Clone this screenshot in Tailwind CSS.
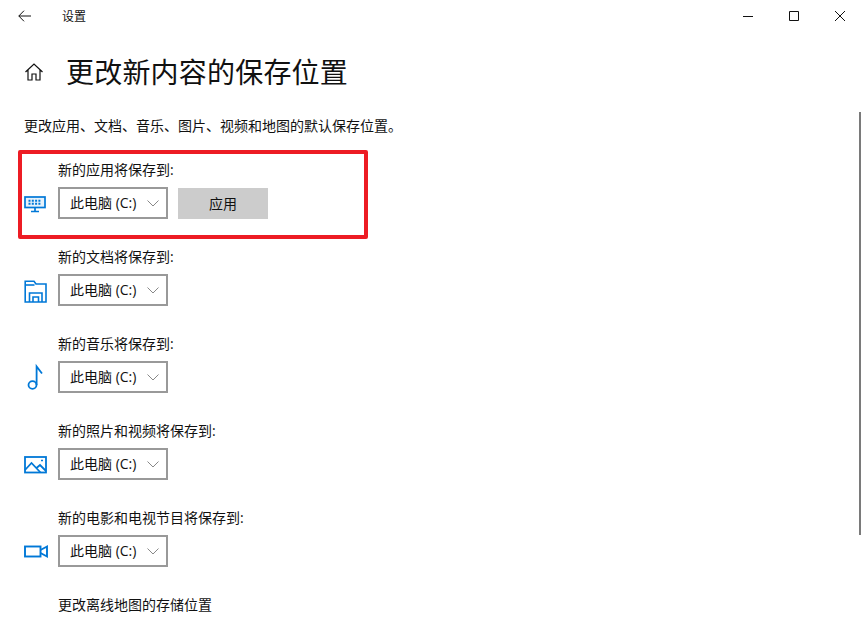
<!DOCTYPE html>
<html lang="zh-CN">
<head>
    <meta charset="UTF-8">
    <title>设置</title>
    <script src="https://cdn.jsdelivr.net/npm/@tailwindcss/browser@4"></script>
</head>
<body class="bg-white text-[#111] font-['Open_Sans','Noto_Sans_CJK_SC',sans-serif] overflow-hidden">
<div class="relative w-[863px] h-[620px] overflow-hidden">

    <!-- title bar -->
    <div class="flex items-center h-8">
        <div class="w-12 flex justify-center">
            <svg width="13" height="12" viewBox="0 0 13 12" fill="none" stroke="#111" stroke-width="1"><path d="M.8 6H13M6 .7L.8 6L6 11.3"/></svg>
        </div>
        <span class="ml-[14px] mt-[2px] text-xs">设置</span>
        <div class="ml-auto flex items-center">
            <div class="w-[46px] flex justify-center"><svg width="10" height="10" viewBox="0 0 10 10" stroke="#111" fill="none"><path d="M0 5.5H10"/></svg></div>
            <div class="w-[46px] flex justify-center"><svg width="10" height="10" viewBox="0 0 10 10" stroke="#111" fill="none"><path d="M.5.5H9.5V9.5H.5Z"/></svg></div>
            <div class="w-[46px] flex justify-center"><svg width="10" height="10" viewBox="0 0 10 10" stroke="#111" fill="none"><path d="M0 0L10 10M10 0L0 10"/></svg></div>
        </div>
    </div>

    <!-- heading -->
    <div class="flex items-center mt-[19px] h-[42px] pl-[24px]">
        <svg width="20" height="20" viewBox="0 0 20 20" fill="none" stroke="#111" stroke-width="1.2"><path d="M1.5 10L10 2L18.5 10M4 8V18H8V12H12V18H16V8"/></svg>
        <h1 class="ml-[22px] text-[28px] leading-[42px] font-normal tracking-[0.2px]">更改新内容的保存位置</h1>
    </div>

    <p class="mt-[23px] pl-[24px] text-sm leading-[20px]">更改应用、文档、音乐、图片、视频和地图的默认保存位置。</p>

    <div class="mt-[24px] flex flex-col gap-[28px] pl-[22px]">
        <div>
            <div class="pl-[36px] text-sm leading-[20px]">新的应用将保存到:</div>
            <div class="mt-[7px] flex items-start">
                <svg class="mr-[10px]" width="26" height="32" viewBox="0 0 26 32" fill="none" stroke="#0078d7" stroke-width="1.7"><rect x="3" y="10" width="20" height="10.5" fill="#e6f2fb"/><path d="M13 21V24.5M9 24.5H17"/><path d="M6.5 13.7H19.5M6.5 16.8H19.5" stroke-width="2" stroke-dasharray="2 1.3"/></svg>
                <div class="flex items-center justify-between w-[110px] h-[32px] border-2 border-[#999] pl-[10px] pr-[7px] text-sm">
                    <span>此电脑 (C:)</span>
                    <svg width="12" height="7" viewBox="0 0 12 7" fill="none" stroke="#888"><path d="M.5.5L6 6L11.5.5"/></svg>
                </div>
                <div class="flex items-center justify-center ml-[10px] mt-px w-[90px] h-[31px] bg-[#ccc] text-sm">应用</div>
            </div>
        </div>
        <div>
            <div class="pl-[36px] text-sm leading-[20px]">新的文档将保存到:</div>
            <div class="mt-[7px] flex items-start">
                <svg class="mr-[10px]" width="26" height="32" viewBox="0 0 26 32" fill="none" stroke="#0078d7" stroke-width="1.6"><path d="M3.2 28V7.2H12L14 10H24V28H3.2Z"/><path d="M3.2 11H12.5"/><path d="M7.5 28V19H20V28M11 28V23H16.5V28"/></svg>
                <div class="flex items-center justify-between w-[110px] h-[32px] border-2 border-[#999] pl-[10px] pr-[7px] text-sm">
                    <span>此电脑 (C:)</span>
                    <svg width="12" height="7" viewBox="0 0 12 7" fill="none" stroke="#888"><path d="M.5.5L6 6L11.5.5"/></svg>
                </div>
            </div>
        </div>
        <div>
            <div class="pl-[36px] text-sm leading-[20px]">新的音乐将保存到:</div>
            <div class="mt-[7px] flex items-start">
                <svg class="mr-[10px]" width="26" height="32" viewBox="0 0 26 32" fill="none" stroke="#0078d7" stroke-width="1.8"><ellipse cx="10.5" cy="24" rx="4" ry="3.8"/><path d="M14.6 24V5.5L20 12.5"/></svg>
                <div class="flex items-center justify-between w-[110px] h-[32px] border-2 border-[#999] pl-[10px] pr-[7px] text-sm">
                    <span>此电脑 (C:)</span>
                    <svg width="12" height="7" viewBox="0 0 12 7" fill="none" stroke="#888"><path d="M.5.5L6 6L11.5.5"/></svg>
                </div>
            </div>
        </div>
        <div>
            <div class="pl-[36px] text-sm leading-[20px]">新的照片和视频将保存到:</div>
            <div class="mt-[7px] flex items-start">
                <svg class="mr-[10px]" width="26" height="32" viewBox="0 0 26 32" fill="none" stroke="#0078d7" stroke-width="1.8"><rect x="3" y="9" width="21" height="15.5"/><path d="M3 22L9.5 15L18.5 24.5M14.5 20L18 17L24 23"/><path d="M19 12.5H21" stroke-width="1.6"/></svg>
                <div class="flex items-center justify-between w-[110px] h-[32px] border-2 border-[#999] pl-[10px] pr-[7px] text-sm">
                    <span>此电脑 (C:)</span>
                    <svg width="12" height="7" viewBox="0 0 12 7" fill="none" stroke="#888"><path d="M.5.5L6 6L11.5.5"/></svg>
                </div>
            </div>
        </div>
        <div>
            <div class="pl-[36px] text-sm leading-[20px]">新的电影和电视节目将保存到:</div>
            <div class="mt-[7px] flex items-start">
                <svg class="mr-[10px]" width="26" height="32" viewBox="0 0 26 32" fill="none" stroke="#0078d7" stroke-width="1.9"><rect x="3" y="11.5" width="15.5" height="10"/><path d="M18.5 15L25 11.5V21.5L18.5 18"/></svg>
                <div class="flex items-center justify-between w-[110px] h-[32px] border-2 border-[#999] pl-[10px] pr-[7px] text-sm">
                    <span>此电脑 (C:)</span>
                    <svg width="12" height="7" viewBox="0 0 12 7" fill="none" stroke="#888"><path d="M.5.5L6 6L11.5.5"/></svg>
                </div>
            </div>
        </div>
        <div class="pl-[36px] text-sm leading-[20px]">更改离线地图的存储位置</div>
    </div>

    <!-- annotation and scrollbar lie over the content -->
    <div class="absolute left-[18px] top-[150px] w-[350px] h-[89px] border-4 border-[#ed1c24] rounded-[2px]"></div>
    <div class="absolute left-[859px] top-[112px] w-[2px] h-[423px] bg-[#7a7a7a]"></div>
</div>
</body>
</html>
